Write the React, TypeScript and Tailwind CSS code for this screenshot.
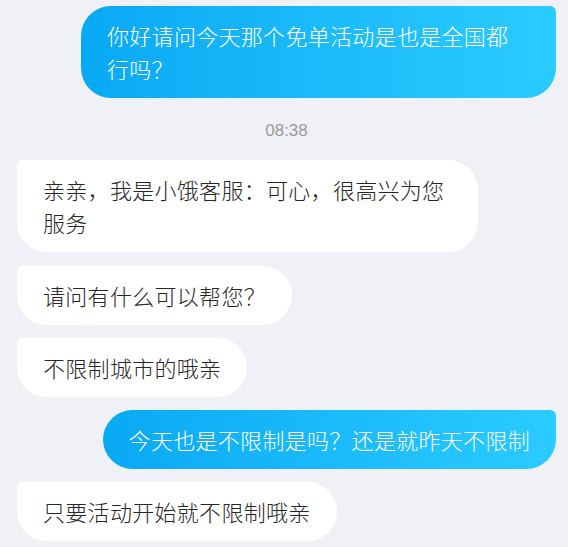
const font = { fontFamily: '"Noto Sans CJK SC", "Noto Sans", sans-serif' };

function Mine({ text, className = "" }: { text: string; className?: string }) {
  return (
    <div className="flex justify-end">
      <div
        className={`rounded-[30px] rounded-tr-[6px] bg-gradient-to-r from-[#08a9f4] to-[#2acbff] px-[26px] py-[13px] text-[22px] leading-[33px] font-light tracking-[0.3px] text-white ${className}`}
      >
        {text}
      </div>
    </div>
  );
}

function Theirs({ text, className = "" }: { text: string; className?: string }) {
  return (
    <div className="flex justify-start">
      <div
        className={`rounded-[30px] rounded-tl-[6px] bg-white px-[26px] py-[13px] text-[22px] leading-[33px] font-light tracking-[0.3px] text-[#262626] ${className}`}
      >
        {text}
      </div>
    </div>
  );
}

export default function App() {
  return (
    <div className="h-[547px] w-[568px] overflow-hidden bg-[#f0f1f6] pl-[17px] pr-[12px] pt-[6px]" style={font}>
      <Mine text="你好请问今天那个免单活动是也是全国都行吗？" className="w-[475px]" />
      <div
        className="flex h-[62px] items-center justify-center pt-[4px] text-[17px] text-[#9a9a9a]"
        style={{ fontFamily: '"Liberation Sans", Arial, sans-serif' }}
      >
        08:38
      </div>
      <div className="flex flex-col gap-[13px]">
        <Theirs text="亲亲，我是小饿客服：可心，很高兴为您服务" className="mb-[1px] w-[461px]" />
        <Theirs text="请问有什么可以帮您？" />
        <Theirs text="不限制城市的哦亲" />
        <Mine text="今天也是不限制是吗？还是就昨天不限制" />
        <Theirs text="只要活动开始就不限制哦亲" />
      </div>
    </div>
  );
}
